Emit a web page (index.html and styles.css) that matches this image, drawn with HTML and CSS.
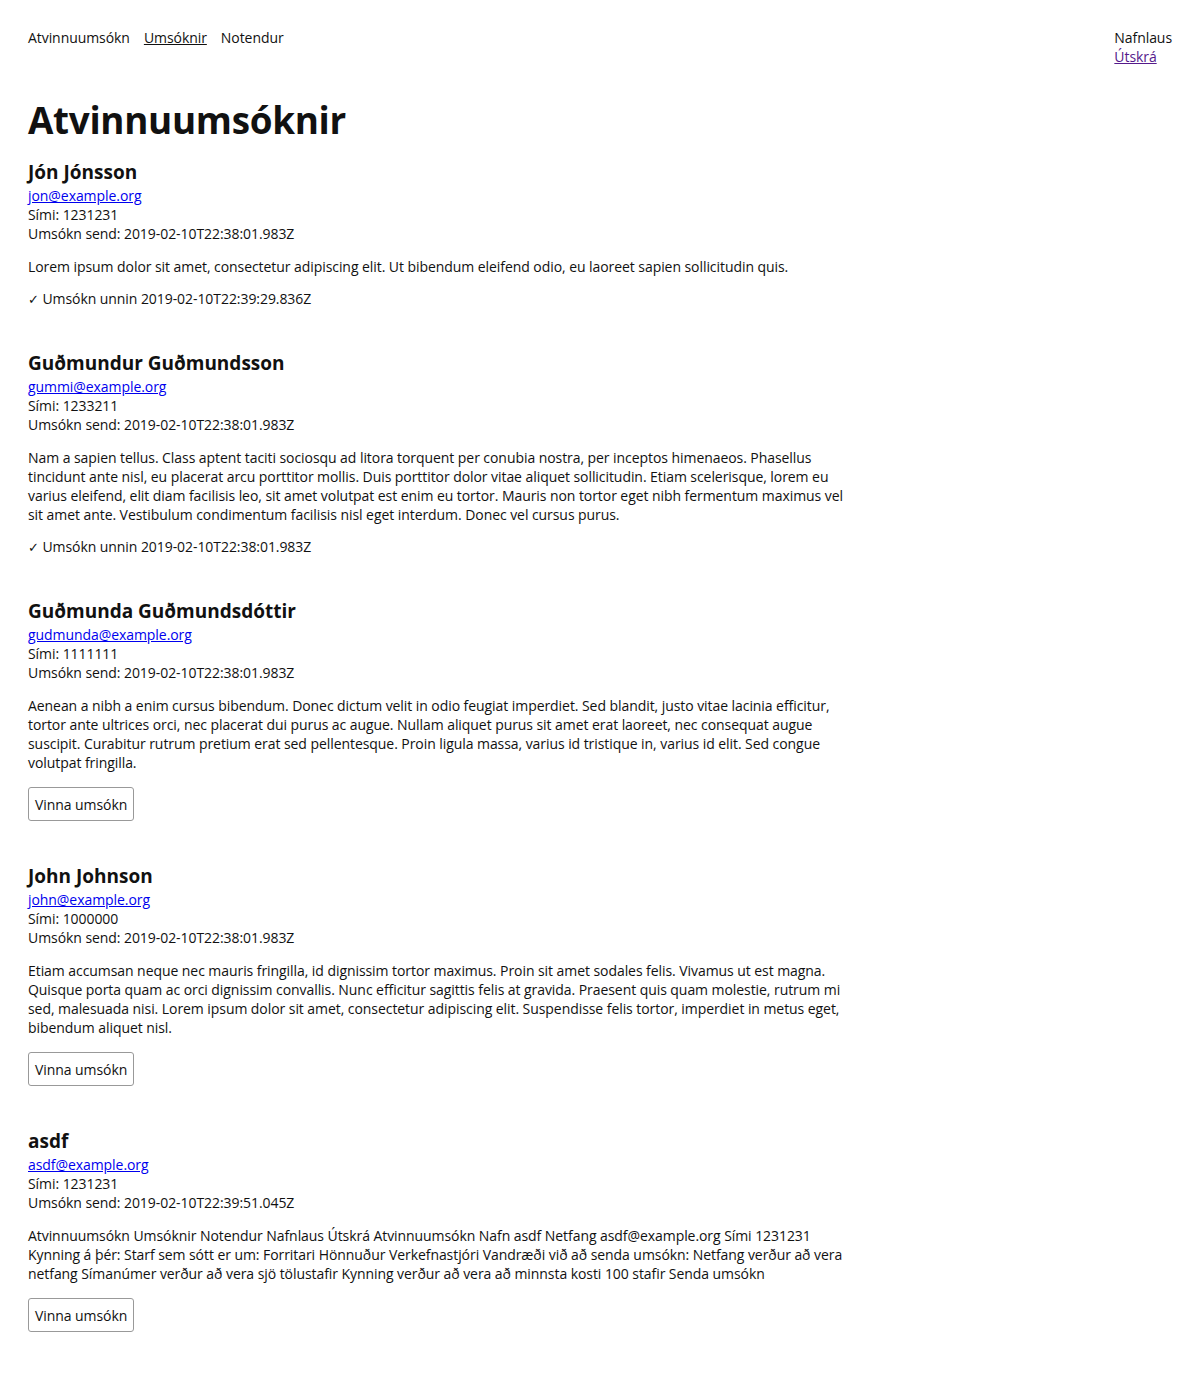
FILE: index.html
```html
<!DOCTYPE html>
<html lang="is">
<head>
<meta charset="utf-8">
<title>Atvinnuumsóknir</title>
<link rel="stylesheet" href="styles.css">
</head>
<body>
<header class="header">
  <nav class="nav">
    <a class="nav-link" href="#">Atvinnuumsókn</a>
    <a class="nav-link nav-link-active" href="#">Umsóknir</a>
    <a class="nav-link" href="#">Notendur</a>
  </nav>
  <div class="user">
    <div class="user-name">Nafnlaus</div>
    <a class="user-logout" href="#">Útskrá</a>
  </div>
</header>
<main class="main">
  <h1 class="title">Atvinnuumsóknir</h1>
  <ul class="apps">
    <li class="app">
      <h2 class="app-name">Jón Jónsson</h2>
      <a class="app-email" href="#">jon@example.org</a>
      <div class="app-line">Sími: 1231231</div>
      <div class="app-line">Umsókn send: 2019-02-10T22:38:01.983Z</div>
      <p class="app-text">Lorem ipsum dolor sit amet, consectetur adipiscing elit. Ut bibendum eleifend odio, eu laoreet sapien sollicitudin quis.</p>
      <p class="app-done"><span class="check">✓</span> Umsókn unnin 2019-02-10T22:39:29.836Z</p>
    </li>
    <li class="app">
      <h2 class="app-name">Guðmundur Guðmundsson</h2>
      <a class="app-email" href="#">gummi@example.org</a>
      <div class="app-line">Sími: 1233211</div>
      <div class="app-line">Umsókn send: 2019-02-10T22:38:01.983Z</div>
      <p class="app-text">Nam a sapien tellus. Class aptent taciti sociosqu ad litora torquent per conubia nostra, per inceptos himenaeos. Phasellus tincidunt ante nisl, eu placerat arcu porttitor mollis. Duis porttitor dolor vitae aliquet sollicitudin. Etiam scelerisque, lorem eu varius eleifend, elit diam facilisis leo, sit amet volutpat est enim eu tortor. Mauris non tortor eget nibh fermentum maximus vel sit amet ante. Vestibulum condimentum facilisis nisl eget interdum. Donec vel cursus purus.</p>
      <p class="app-done"><span class="check">✓</span> Umsókn unnin 2019-02-10T22:38:01.983Z</p>
    </li>
    <li class="app">
      <h2 class="app-name">Guðmunda Guðmundsdóttir</h2>
      <a class="app-email" href="#">gudmunda@example.org</a>
      <div class="app-line">Sími: 1111111</div>
      <div class="app-line">Umsókn send: 2019-02-10T22:38:01.983Z</div>
      <p class="app-text">Aenean a nibh a enim cursus bibendum. Donec dictum velit in odio feugiat imperdiet. Sed blandit, justo vitae lacinia efficitur, tortor ante ultrices orci, nec placerat dui purus ac augue. Nullam aliquet purus sit amet erat laoreet, nec consequat augue suscipit. Curabitur rutrum pretium erat sed pellentesque. Proin ligula massa, varius id tristique in, varius id elit. Sed congue volutpat fringilla.</p>
      <button class="app-button" type="button">Vinna umsókn</button>
    </li>
    <li class="app">
      <h2 class="app-name">John Johnson</h2>
      <a class="app-email" href="#">john@example.org</a>
      <div class="app-line">Sími: 1000000</div>
      <div class="app-line">Umsókn send: 2019-02-10T22:38:01.983Z</div>
      <p class="app-text">Etiam accumsan neque nec mauris fringilla, id dignissim tortor maximus. Proin sit amet sodales felis. Vivamus ut est magna. Quisque porta quam ac orci dignissim convallis. Nunc efficitur sagittis felis at gravida. Praesent quis quam molestie, rutrum mi sed, malesuada nisi. Lorem ipsum dolor sit amet, consectetur adipiscing elit. Suspendisse felis tortor, imperdiet in metus eget, bibendum aliquet nisl.</p>
      <button class="app-button" type="button">Vinna umsókn</button>
    </li>
    <li class="app">
      <h2 class="app-name">asdf</h2>
      <a class="app-email" href="#">asdf@example.org</a>
      <div class="app-line">Sími: 1231231</div>
      <div class="app-line">Umsókn send: 2019-02-10T22:39:51.045Z</div>
      <p class="app-text">Atvinnuumsókn Umsóknir Notendur Nafnlaus Útskrá Atvinnuumsókn Nafn asdf Netfang asdf@example.org Sími 1231231 Kynning á þér: Starf sem sótt er um: Forritari Hönnuður Verkefnastjóri Vandræði við að senda umsókn: Netfang verður að vera netfang Símanúmer verður að vera sjö tölustafir Kynning verður að vera að minnsta kosti 100 stafir Senda umsókn</p>
      <button class="app-button" type="button">Vinna umsókn</button>
    </li>
  </ul>
</main>
</body>
</html>
```

FILE: styles.css
```css
html, body {
  margin: 0;
  padding: 0;
  background: #fff;
}

body {
  font-family: "Open Sans", "Noto Sans", sans-serif;
  font-size: 14px;
  line-height: 19px;
  letter-spacing: -0.065px;
  color: #111;
  padding: 28px 28px 42px;
}

.header {
  display: flex;
  justify-content: space-between;
  align-items: flex-start;
}

.nav {
  display: flex;
  gap: 14px;
}

.nav-link {
  color: #111;
  text-decoration: none;
}

.nav-link-active {
  text-decoration: underline;
}

.user {
  display: flex;
  flex-direction: column;
  align-items: flex-start;
}

.user-logout {
  color: #551a8b;
}

.main {
  max-width: 825px;
  margin-top: 30px;
}

.title {
  font-family: "Open Sans", "Noto Sans", sans-serif;
  font-weight: 700;
  font-size: 36.8px;
  line-height: 48px;
  letter-spacing: -0.3px;
  margin: 0 0 15px;
  color: #111;
}

.apps {
  list-style: none;
  margin: 0;
  padding: 0;
}

.app {
  display: flex;
  flex-direction: column;
  align-items: flex-start;
  margin-bottom: 42px;
}

.app:last-child {
  margin-bottom: 0;
}

.app-name {
  font-weight: 700;
  font-size: 19px;
  line-height: 27px;
  letter-spacing: 0;
  margin: 0;
  color: #111;
}

.app-email {
  color: #0000ee;
}

.app-text,
.app-done {
  margin: 14px 0 0;
}

.app-done {
  margin-top: 13px;
}

.check {
  font-family: "DejaVu Sans", sans-serif;
  font-weight: 700;
  font-size: 13px;
  line-height: 0;
}

.app-button {
  margin-top: 15px;
  font-family: inherit;
  font-size: 14px;
  line-height: 19px;
  letter-spacing: -0.065px;
  color: #111;
  background: #fff;
  border: 1px solid #999;
  border-radius: 3px;
  padding: 0 6px;
  height: 34px;
}
```
